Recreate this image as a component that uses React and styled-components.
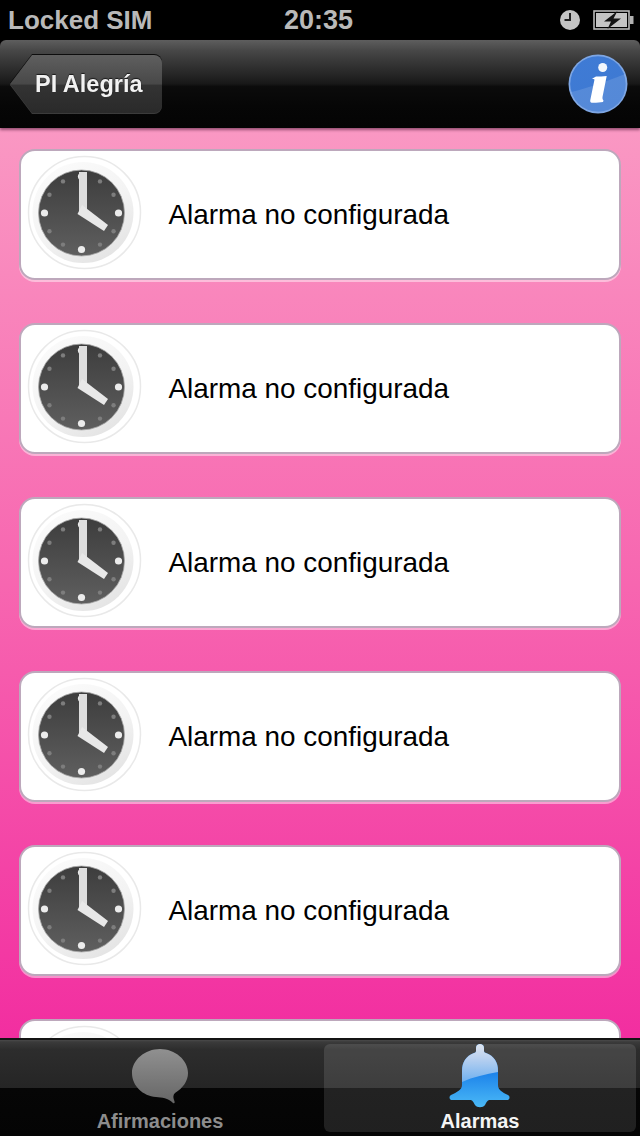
import React from 'react';
import styled, { createGlobalStyle } from 'styled-components';

const GlobalStyle = createGlobalStyle`
  html, body {
    margin: 0;
    padding: 0;
    background: #000;
  }
  body {
    font-family: "Liberation Sans", Arial, sans-serif;
  }
`;

const Screen = styled.div`
  width: 640px;
  height: 1136px;
  display: flex;
  flex-direction: column;
  overflow: hidden;
  background: #000;
`;

const StatusBar = styled.div`
  flex: 0 0 40px;
  height: 40px;
  display: grid;
  grid-template-columns: 276px auto 1fr;
  align-items: center;
  padding: 0 6px 0 8px;
  color: #b9b9b9;
  font-size: 26px;
  font-weight: 700;
`;

const Time = styled.span`
  font-size: 27px;
`;

const StatusRight = styled.div`
  display: flex;
  align-items: center;
  justify-content: flex-end;
  gap: 13px;
`;

const NavBar = styled.div`
  flex: 0 0 88px;
  height: 88px;
  box-sizing: border-box;
  display: flex;
  align-items: center;
  justify-content: space-between;
  padding: 0 12px 0 32px;
  border-radius: 6px 6px 0 0;
  background: linear-gradient(to bottom, #5e5e5e 0%, #474747 12%, #333 28%, #222 42%, #171717 50%, #0b0b0b 53%, #060606 75%, #040404 100%);
  box-shadow: 0 2px 3px rgba(70, 20, 50, 0.55);
  position: relative;
  z-index: 2;
`;

const BackButton = styled.div`
  position: relative;
  width: 130px;
  height: 58px;
  display: flex;
  align-items: center;
  padding-left: 3px;
  box-sizing: border-box;
  color: #f2f2f2;
  font-size: 23.5px;
  font-weight: 700;
  border-radius: 0 8px 8px 0;
  background: linear-gradient(to bottom, #5f5f5f 0%, #484848 50%, #333 52%, #2a2a2a 100%);
  filter: drop-shadow(0 1px 0 rgba(255, 255, 255, 0.22)) drop-shadow(0 -1px 0 rgba(0, 0, 0, 0.8));

  &::before {
    content: '';
    position: absolute;
    left: -22px;
    top: 0;
    width: 22px;
    height: 58px;
    clip-path: polygon(100% 0, 0 50%, 100% 100%);
    background: linear-gradient(to bottom, #5f5f5f 0%, #484848 50%, #333 52%, #2a2a2a 100%);
  }
`;

const BackLabel = styled.span`
  text-shadow: 0 -1px 1px rgba(0, 0, 0, 0.7);
`;

const Content = styled.div`
  flex: 1;
  min-height: 0;
  overflow: hidden;
  display: flex;
  flex-direction: column;
  gap: 43px;
  padding: 21px 19px 0;
  background: linear-gradient(to bottom, #fa98c3 0%, #f766b0 50%, #f22ea0 100%);
`;

const AlarmCard = styled.div`
  flex: 0 0 131px;
  height: 131px;
  box-sizing: border-box;
  display: flex;
  align-items: center;
  gap: 24.5px;
  padding-left: 3px;
  background: #fff;
  border: 2px solid #bda8bc;
  border-radius: 16px;
  box-shadow: 0 2px 0 rgba(255, 255, 255, 0.45);
  color: #000;
  font-size: 27.9px;
`;

const ClockSvg = styled.svg`
  flex: none;
  margin-top: -1px;
  filter: blur(0.5px);
`;

const TabBar = styled.div`
  flex: 0 0 96px;
  height: 96px;
  box-sizing: border-box;
  display: grid;
  grid-template-columns: 1fr 1fr;
  grid-template-rows: 88px;
  gap: 8px;
  padding: 4px;
  background: linear-gradient(to bottom, #4a4a4a 0, #3a3a3a 2px, #2d2d2d 10%, #252525 50%, #060606 50%, #040404 100%);
  box-shadow: 0 -2px 0 #141414;
  position: relative;
  z-index: 2;
`;

const Tab = styled.div`
  display: flex;
  flex-direction: column;
  align-items: center;
  justify-content: space-between;
  border-radius: 6px;
  font-size: 20px;
  font-weight: 700;
  line-height: 22px;
  color: ${(p) => (p.$active ? '#f5f5f5' : '#8d8d8d')};
  background: ${(p) => (p.$active ? 'rgba(255, 255, 255, 0.115)' : 'transparent')};
`;

const TabIcon = styled.div`
  height: 64px;
  box-sizing: border-box;
  display: flex;
  align-items: flex-start;
  justify-content: center;
  padding-top: ${(p) => p.$top}px;
`;

const ClockDots = () => {
  const dots = [];
  for (let i = 0; i < 12; i++) {
    const a = (i * Math.PI) / 6;
    const big = i % 3 === 0;
    dots.push(
      <circle
        key={i}
        cx={57.5 + Math.sin(a) * 37}
        cy={59 - Math.cos(a) * 36.5}
        r={big ? 3.6 : 2.2}
        fill={big ? '#ececec' : '#7d7d7d'}
      />
    );
  }
  return dots;
};

const ClockIcon = () => (
  <ClockSvg width="120" height="120" viewBox="0 0 120 120">
    <defs>
      <linearGradient id="rim" x1="0.2" y1="0" x2="0.8" y2="1">
        <stop offset="0" stopColor="#fbfbfb" />
        <stop offset="0.55" stopColor="#f3f3f3" />
        <stop offset="1" stopColor="#e2e2e2" />
      </linearGradient>
      <linearGradient id="face" x1="0" y1="0" x2="0" y2="1">
        <stop offset="0" stopColor="#3d3d3d" />
        <stop offset="1" stopColor="#5f5f5f" />
      </linearGradient>
    </defs>
    <circle cx="60.5" cy="58.5" r="56" fill="#fff" stroke="#e9e9e9" strokeWidth="1.5" />
    <circle cx="59" cy="58.5" r="50.5" fill="url(#rim)" />
    <circle cx="57.5" cy="59" r="43" fill="url(#face)" stroke="#a8a8a8" strokeWidth="0.8" />
    <ClockDots />
    <path d="M55 18h8v37l-8 4z" fill="#dedede" />
    <path d="M53.500 60l4.500-9 26 20-4 6z" fill="#e8e8e8" />
  </ClockSvg>
);

const InfoIcon = () => (
  <svg width="60" height="60" viewBox="0 0 60 60">
    <defs>
      <linearGradient id="infoBg" x1="0.1" y1="0" x2="0.6" y2="1">
        <stop offset="0" stopColor="#3f7bd5" />
        <stop offset="1" stopColor="#3e79d2" />
      </linearGradient>
    </defs>
    <circle cx="30" cy="30" r="29.500" fill="#7ea6e3" />
    <circle cx="30" cy="30" r="27.800" fill="url(#infoBg)" />
    <path d="M3 38c14-3 34-10 54-18 1 3 1 7 1 10 0 15-13 28-28 28C17 58 6 50 3 38z" fill="#fff" opacity="0.12" />
    <circle cx="34.700" cy="13.500" r="4.500" fill="#f2f6fc" />
    <path d="M28 22.500c3 0 7 0 10.700-.5L34.500 43c-.3 2 .5 3 1 3.500l-.5 1.500c-3 .5-7 .8-11.500.7-1.500-.2-1.500-2-1-3.700l4-19.500c-.8-.6-1.800-.7-3-.6z" fill="#fff" />
  </svg>
);

const SmallClock = () => (
  <svg width="20" height="20" viewBox="0 0 20 20">
    <circle cx="10" cy="10" r="10" fill="#c4c4c4" />
    <path d="M9 3h2v8H4.500V9H9z" fill="#222" />
  </svg>
);

const Battery = () => (
  <svg width="41" height="20" viewBox="0 0 41 20">
    <rect x="1" y="1" width="35" height="18" fill="none" stroke="#b8b8b8" strokeWidth="1.600" />
    <rect x="3" y="3" width="31" height="14" fill="#c4c4c4" />
    <rect x="37" y="6" width="3.500" height="8" fill="#b0b0b0" />
    <path d="M24.500 1L11 11.500h7l-3.500 7.500L28 8.500h-7.500z" fill="#141414" />
  </svg>
);

const BubbleIcon = () => (
  <svg width="58" height="56" viewBox="0 0 58 56">
    <defs>
      <linearGradient id="bubble" x1="0" y1="0" x2="0" y2="1">
        <stop offset="0" stopColor="#909090" />
        <stop offset="1" stopColor="#666" />
      </linearGradient>
    </defs>
    <path
      d="M29 1C14 1 1 12 1 25c0 13 11 23 24 24 6 .5 12 1 17 6 2 1 2-1 1-3-1-3-1-5 1-7 8-5 13-12 13-20C57 12 44 1 29 1z"
      fill="url(#bubble)"
    />
  </svg>
);

const BellIcon = () => (
  <svg width="62" height="64" viewBox="0 0 62 64">
    <defs>
      <linearGradient id="bellTop" x1="0" y1="0" x2="0" y2="1">
        <stop offset="0" stopColor="#dfe5ee" />
        <stop offset="0.35" stopColor="#bcd2f0" />
        <stop offset="1" stopColor="#6fb0ef" />
      </linearGradient>
      <linearGradient id="bellBottom" x1="0" y1="0" x2="0" y2="1">
        <stop offset="0.45" stopColor="#1c82ea" />
        <stop offset="0.8" stopColor="#3aa6f2" />
        <stop offset="1" stopColor="#4ab9f6" />
      </linearGradient>
    </defs>
    <path
      d="M31 0c2 0 4 1 4 4v3c0 1 1 2 2 2 8 3 12 9 12 18v14c0 5 4 7 10 10 2 1 2 4 0 5H41c-2 0-3 1-5 5-2 3-8 3-10 0-2-4-3-5-5-5H2c-2-1-2-4 0-5 6-3 11-5 11-10V27c0-9 4-15 12-18 1 0 2-1 2-2V4c0-3 2-4 4-4z"
      fill="url(#bellBottom)"
    />
    <path
      d="M31 0c2 0 4 1 4 4v3c0 1 1 2 2 2 8 3 12 9 12 18v1C37 30 24 33 13 38V27c0-9 4-15 12-18 1 0 2-1 2-2V4c0-3 2-4 4-4z"
      fill="url(#bellTop)"
    />
  </svg>
);

const alarms = [1, 2, 3, 4, 5, 6];

export default function App() {
  return (
    <Screen>
      <GlobalStyle />
      <StatusBar>
        <span>Locked SIM</span>
        <Time>20:35</Time>
        <StatusRight>
          <SmallClock />
          <Battery />
        </StatusRight>
      </StatusBar>
      <NavBar>
        <BackButton>
          <BackLabel>PI Alegría</BackLabel>
        </BackButton>
        <InfoIcon />
      </NavBar>
      <Content>
        {alarms.map((id) => (
          <AlarmCard key={id}>
            <ClockIcon />
            <span>Alarma no configurada</span>
          </AlarmCard>
        ))}
      </Content>
      <TabBar>
        <Tab>
          <TabIcon $top={4}>
            <BubbleIcon />
          </TabIcon>
          <span>Afirmaciones</span>
        </Tab>
        <Tab $active>
          <TabIcon $top={0}>
            <BellIcon />
          </TabIcon>
          <span>Alarmas</span>
        </Tab>
      </TabBar>
    </Screen>
  );
}
